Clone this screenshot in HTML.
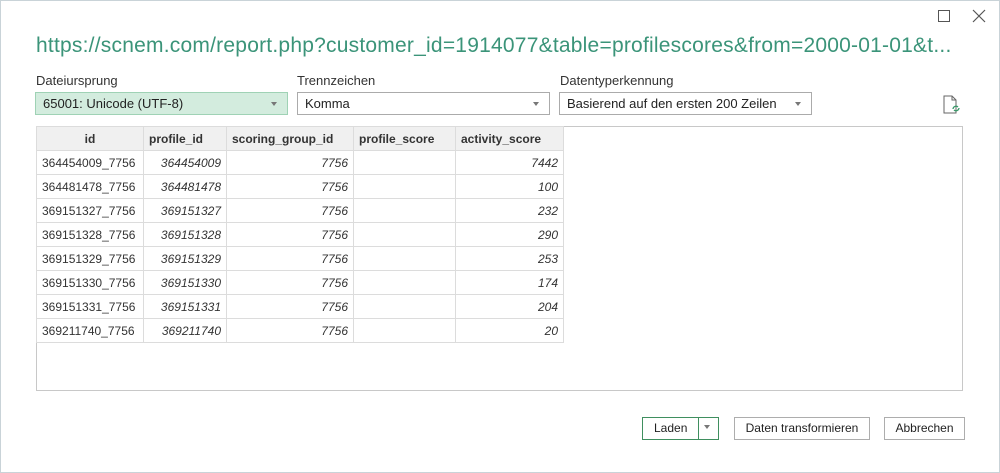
<!DOCTYPE html>
<html><head><style>
body{margin:0;width:1000px;height:473px;background:#fff;font-family:"Liberation Sans",sans-serif;position:relative;overflow:hidden}
.win{position:absolute;left:0;top:0;width:998px;height:471px;border:1px solid #c9d3d8}
.a{position:absolute}
.title{left:36px;top:34px;font-size:21px;color:#3b9479;white-space:nowrap;letter-spacing:0.22px}
.lbl{font-size:13px;color:#333;top:73px}
.dd{top:92px;height:23px;border:1px solid #ababab;box-sizing:border-box;font-size:13px;color:#222;line-height:21px;padding-left:7px}
.dd:after{content:"";position:absolute;right:10px;top:9px;border:3px solid transparent;border-top:4px solid #777}
table{position:absolute;left:36px;top:126px;border-collapse:collapse;font-size:12px;color:#333}
td,th{border:1px solid #dcdcdc;height:23px;padding:0 5px;white-space:nowrap}
th{background:#f0f0f0;font-weight:bold;text-align:left}
td{text-align:right;font-style:italic}
td:first-child{text-align:left;font-style:normal}
.btn{top:417px;height:23px;border:1px solid #adadad;box-sizing:border-box;font-size:12px;color:#222;text-align:center;line-height:21px}
</style></head><body>
<div class="win"></div>
<div class="a" style="left:938px;top:10px;width:10px;height:10px;border:1px solid #555"></div>
<svg class="a" style="left:972px;top:9px" width="14" height="14"><path d="M1 1L13 13M13 1L1 13" stroke="#555" stroke-width="1.2"/></svg>
<div class="a title">https://scnem.com/report.php?customer_id=1914077&amp;table=profilescores&amp;from=2000-01-01&amp;t...</div>
<div class="a lbl" style="left:36px">Dateiursprung</div>
<div class="a lbl" style="left:297px">Trennzeichen</div>
<div class="a lbl" style="left:560px">Datentyperkennung</div>
<div class="a dd" style="left:35px;width:253px;background:#d3ecde;border-color:#9fd2b5">65001: Unicode (UTF-8)</div>
<div class="a dd" style="left:297px;width:253px">Komma</div>
<div class="a dd" style="left:559px;width:253px">Basierend auf den ersten 200 Zeilen</div>
<svg class="a" style="left:943px;top:95px" width="18" height="20"><path d="M1 1H9L13 5V18H1Z M9 1V5H13" fill="none" stroke="#666"/><path d="M10 14a3 3 0 0 1 5-2M16 13a3 3 0 0 1-5 2" fill="none" stroke="#3a9a6a" stroke-width="1.3"/></svg>
<div class="a" style="left:36px;top:126px;width:927px;height:265px;border:1px solid #c8c8c8;box-sizing:border-box"></div>
<table>
<tr><th style="width:96px;text-align:center">id</th><th style="width:72px">profile_id</th><th style="width:116px">scoring_group_id</th><th style="width:91px">profile_score</th><th style="width:97px">activity_score</th></tr>
<tr><td>364454009_7756</td><td>364454009</td><td>7756</td><td></td><td>7442</td></tr>
<tr><td>364481478_7756</td><td>364481478</td><td>7756</td><td></td><td>100</td></tr>
<tr><td>369151327_7756</td><td>369151327</td><td>7756</td><td></td><td>232</td></tr>
<tr><td>369151328_7756</td><td>369151328</td><td>7756</td><td></td><td>290</td></tr>
<tr><td>369151329_7756</td><td>369151329</td><td>7756</td><td></td><td>253</td></tr>
<tr><td>369151330_7756</td><td>369151330</td><td>7756</td><td></td><td>174</td></tr>
<tr><td>369151331_7756</td><td>369151331</td><td>7756</td><td></td><td>204</td></tr>
<tr><td>369211740_7756</td><td>369211740</td><td>7756</td><td></td><td>20</td></tr>
</table>
<div class="a btn" style="left:642px;width:77px;border-color:#3f8f5f;text-align:left;padding-left:11px">Laden</div>
<div class="a" style="left:698px;top:417px;width:1px;height:23px;background:#3f8f5f"></div>
<div class="a" style="left:704px;top:425px;border:3px solid transparent;border-top:4px solid #777"></div>
<div class="a btn" style="left:734px;width:136px">Daten transformieren</div>
<div class="a btn" style="left:884px;width:81px">Abbrechen</div>
</body></html>
